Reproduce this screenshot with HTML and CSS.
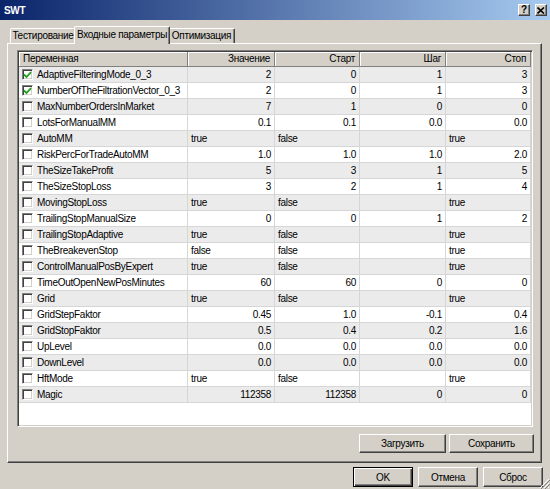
FILE: index.html
```html
<!DOCTYPE html>
<html>
<head>
<meta charset="utf-8">
<title>SWT</title>
<link rel="stylesheet" href="styles.css">
</head>
<body>
<div class="window">
  <div class="titlebar">
    <span class="title">SWT</span>
    <div class="tbtns">
      <span class="tbtn">?</span>
      <span class="tbtn x">
        <svg width="8" height="7" viewBox="0 0 8 7"><path d="M0.5 0.5 L7 6.5 M7 0.5 L0.5 6.5" stroke="#000" stroke-width="1.6"/></svg>
      </span>
    </div>
  </div>

  <div class="tabs">
    <div class="tab t1">Тестирование</div>
    <div class="tab t2 active">Входные параметры</div>
    <div class="tab t3">Оптимизация</div>
  </div>

  <div class="panel">
    <div class="list">
      <div class="row head">
        <div class="hc">Переменная</div>
        <div class="hc n">Значение</div>
        <div class="hc n">Старт</div>
        <div class="hc n">Шаг</div>
        <div class="hc n">Стоп</div>
      </div>

      <div class="row g">
        <div class="c name"><span class="cb on"><svg width="9" height="8" viewBox="0 0 9 8"><path d="M1 3.5 L3.5 6 L8 1.2" fill="none" stroke="#1d9e1d" stroke-width="1.8"/></svg></span>AdaptiveFilteringMode_0_3</div>
        <div class="c n">2</div><div class="c n">0</div><div class="c n">1</div><div class="c n">3</div>
      </div>
      <div class="row">
        <div class="c name"><span class="cb on"><svg width="9" height="8" viewBox="0 0 9 8"><path d="M1 3.5 L3.5 6 L8 1.2" fill="none" stroke="#1d9e1d" stroke-width="1.8"/></svg></span>NumberOfTheFiltrationVector_0_3</div>
        <div class="c n">2</div><div class="c n">0</div><div class="c n">1</div><div class="c n">3</div>
      </div>
      <div class="row g">
        <div class="c name"><span class="cb"></span>MaxNumberOrdersInMarket</div>
        <div class="c n">7</div><div class="c n">1</div><div class="c n">0</div><div class="c n">0</div>
      </div>
      <div class="row">
        <div class="c name"><span class="cb"></span>LotsForManualMM</div>
        <div class="c n">0.1</div><div class="c n">0.1</div><div class="c n">0.0</div><div class="c n">0.0</div>
      </div>
      <div class="row g">
        <div class="c name"><span class="cb"></span>AutoMM</div>
        <div class="c">true</div><div class="c">false</div><div class="c"></div><div class="c">true</div>
      </div>
      <div class="row">
        <div class="c name"><span class="cb"></span>RiskPercForTradeAutoMM</div>
        <div class="c n">1.0</div><div class="c n">1.0</div><div class="c n">1.0</div><div class="c n">2.0</div>
      </div>
      <div class="row g">
        <div class="c name"><span class="cb"></span>TheSizeTakeProfit</div>
        <div class="c n">5</div><div class="c n">3</div><div class="c n">1</div><div class="c n">5</div>
      </div>
      <div class="row">
        <div class="c name"><span class="cb"></span>TheSizeStopLoss</div>
        <div class="c n">3</div><div class="c n">2</div><div class="c n">1</div><div class="c n">4</div>
      </div>
      <div class="row g">
        <div class="c name"><span class="cb"></span>MovingStopLoss</div>
        <div class="c">true</div><div class="c">false</div><div class="c"></div><div class="c">true</div>
      </div>
      <div class="row">
        <div class="c name"><span class="cb"></span>TrailingStopManualSize</div>
        <div class="c n">0</div><div class="c n">0</div><div class="c n">1</div><div class="c n">2</div>
      </div>
      <div class="row g">
        <div class="c name"><span class="cb"></span>TrailingStopAdaptive</div>
        <div class="c">true</div><div class="c">false</div><div class="c"></div><div class="c">true</div>
      </div>
      <div class="row">
        <div class="c name"><span class="cb"></span>TheBreakevenStop</div>
        <div class="c">false</div><div class="c">false</div><div class="c"></div><div class="c">true</div>
      </div>
      <div class="row g">
        <div class="c name"><span class="cb"></span>ControlManualPosByExpert</div>
        <div class="c">true</div><div class="c">false</div><div class="c"></div><div class="c">true</div>
      </div>
      <div class="row">
        <div class="c name"><span class="cb"></span>TimeOutOpenNewPosMinutes</div>
        <div class="c n">60</div><div class="c n">60</div><div class="c n">0</div><div class="c n">0</div>
      </div>
      <div class="row g">
        <div class="c name"><span class="cb"></span>Grid</div>
        <div class="c">true</div><div class="c">false</div><div class="c"></div><div class="c">true</div>
      </div>
      <div class="row">
        <div class="c name"><span class="cb"></span>GridStepFaktor</div>
        <div class="c n">0.45</div><div class="c n">1.0</div><div class="c n">-0.1</div><div class="c n">0.4</div>
      </div>
      <div class="row g">
        <div class="c name"><span class="cb"></span>GridStopFaktor</div>
        <div class="c n">0.5</div><div class="c n">0.4</div><div class="c n">0.2</div><div class="c n">1.6</div>
      </div>
      <div class="row">
        <div class="c name"><span class="cb"></span>UpLevel</div>
        <div class="c n">0.0</div><div class="c n">0.0</div><div class="c n">0.0</div><div class="c n">0.0</div>
      </div>
      <div class="row g">
        <div class="c name"><span class="cb"></span>DownLevel</div>
        <div class="c n">0.0</div><div class="c n">0.0</div><div class="c n">0.0</div><div class="c n">0.0</div>
      </div>
      <div class="row">
        <div class="c name"><span class="cb"></span>HftMode</div>
        <div class="c">true</div><div class="c">false</div><div class="c"></div><div class="c">true</div>
      </div>
      <div class="row g">
        <div class="c name"><span class="cb"></span>Magic</div>
        <div class="c n">112358</div><div class="c n">112358</div><div class="c n">0</div><div class="c n">0</div>
      </div>
    </div>

    <div class="panel-actions">
      <button class="btn load">Загрузить</button>
      <button class="btn save">Сохранить</button>
    </div>
  </div>

  <div class="dialog-actions">
    <button class="btn dlg default">OK</button>
    <button class="btn dlg">Отмена</button>
    <button class="btn dlg">Сброс</button>
  </div>

  <svg class="grip" width="11" height="11" viewBox="0 0 11 11">
    <path d="M10 1 L1 10 M10 5 L5 10 M10 9 L9 10" stroke="#fff" stroke-width="1"/>
    <path d="M11 2 L2 11 M11 6 L6 11" stroke="#808080" stroke-width="1"/>
  </svg>
</div>
</body>
</html>
```

FILE: styles.css
```css
* { box-sizing: border-box; }
html, body { margin: 0; padding: 0; }
body {
  background: #d4d0c8;
  font-family: "Liberation Sans", Arial, sans-serif;
  font-size: 10px;
  letter-spacing: -0.3px;
  color: #000;
  overflow: hidden;
}
.window {
  position: relative;
  width: 550px;
  height: 489px;
  display: flex;
  flex-direction: column;
}

/* title bar */
.titlebar {
  height: 20px;
  flex: none;
  display: flex;
  align-items: center;
  justify-content: space-between;
  background: linear-gradient(to right, #0a246a, #a6caf0);
}
.title {
  color: #fff;
  font-weight: bold;
  font-size: 10px;
  padding-left: 4px;
}
.tbtns {
  display: flex;
  gap: 5px;
  margin-right: 3px;
}
.tbtn {
  width: 12px;
  height: 12px;
  background: #d4d0c8;
  border-top: 1px solid #fff;
  border-left: 1px solid #fff;
  border-right: 1px solid #404040;
  border-bottom: 1px solid #404040;
  box-shadow: inset -1px -1px #808080;
  display: flex;
  align-items: center;
  justify-content: center;
  font-weight: bold;
  font-size: 10px;
  line-height: 10px;
  letter-spacing: 0;
}

/* tabs */
.tabs {
  flex: none;
  height: 17px;
  margin-top: 6px;
  padding-left: 10px;
  display: flex;
  align-items: flex-end;
}
.tab {
  height: 15px;
  line-height: 14px;
  text-align: center;
  border-top: 1px solid #fff;
  border-left: 1px solid #fff;
  border-right: 1px solid #404040;
  box-shadow: inset -1px 0 #808080;
  border-radius: 2px 2px 0 0;
  background: #d4d0c8;
  white-space: nowrap;
}
.tab.t1 { width: 66px; }
.tab.t3 { width: 67px; }
.tab.active {
  position: relative;
  z-index: 1;
  width: 96px;
  height: 18px;
  margin: 0 -2px -1px -2px;
  line-height: 15px;
}

/* tab panel */
.panel {
  flex: none;
  height: 420px;
  margin: 0 8px 0 7px;
  padding: 6px 0 0 9px;
  border-top: 1px solid #fff;
  border-left: 1px solid #fff;
  border-right: 1px solid #404040;
  border-bottom: 1px solid #404040;
  box-shadow: inset -1px -1px #808080;
  display: flex;
  flex-direction: column;
}

/* list view */
.list {
  width: 516px;
  height: 377px;
  flex: none;
  background: #fff;
  border-top: 1px solid #808080;
  border-left: 1px solid #808080;
  border-right: 1px solid #fff;
  border-bottom: 1px solid #fff;
  box-shadow: inset 1px 1px #404040, inset -1px -1px #d4d0c8;
  padding: 1px;
  overflow: hidden;
}
.row {
  display: grid;
  grid-template-columns: 169px 87px 85px 86px 85px;
  height: 16px;
  border-bottom: 1px solid #d6d6d6;
}
.row.g { background: #ebebeb; }
.row.head {
  height: 15px;
  background: #d4d0c8;
  border-bottom: 1px solid #808080;
}
.hc {
  padding: 0 4px;
  line-height: 14px;
  border-right: 1px solid #808080;
  box-shadow: inset 1px 1px #fff;
  white-space: nowrap;
  overflow: hidden;
}
.c {
  padding: 0 3px;
  line-height: 15px;
  border-right: 1px solid #d6d6d6;
  white-space: nowrap;
  overflow: hidden;
}
.n { text-align: right; }
.c.name {
  display: flex;
  align-items: center;
  gap: 4px;
  padding-left: 3px;
}
.cb {
  flex: none;
  width: 11px;
  height: 11px;
  background: #fff;
  border-top: 1px solid #808080;
  border-left: 1px solid #808080;
  border-right: 1px solid #fff;
  border-bottom: 1px solid #fff;
  box-shadow: inset 1px 1px #404040, inset -1px -1px #d4d0c8;
  display: flex;
  align-items: center;
  justify-content: center;
}
.cb svg { display: block; }

/* buttons */
.btn {
  font-family: "Liberation Sans", Arial, sans-serif;
  font-size: 10px;
  letter-spacing: -0.3px;
  color: #000;
  background: #d4d0c8;
  border-top: 1px solid #fff;
  border-left: 1px solid #fff;
  border-right: 1px solid #404040;
  border-bottom: 1px solid #404040;
  box-shadow: inset -1px -1px #808080;
  padding: 0;
  margin: 0;
}
.panel-actions {
  display: flex;
  justify-content: flex-end;
  gap: 3px;
  margin-top: 7px;
  padding-right: 7px;
}
.btn.load { width: 87px; height: 19px; }
.btn.save { width: 85px; height: 19px; }

.dialog-actions {
  display: flex;
  justify-content: flex-end;
  gap: 5px;
  margin-top: 4px;
  padding-right: 7px;
}
.btn.dlg { width: 60px; height: 20px; }
.btn.default {
  border: 1px solid #000;
  box-shadow: inset 1px 1px #fff, inset -1px -1px #404040, inset -2px -2px #808080;
}

.grip {
  position: absolute;
  right: 0;
  bottom: 0;
}
```
